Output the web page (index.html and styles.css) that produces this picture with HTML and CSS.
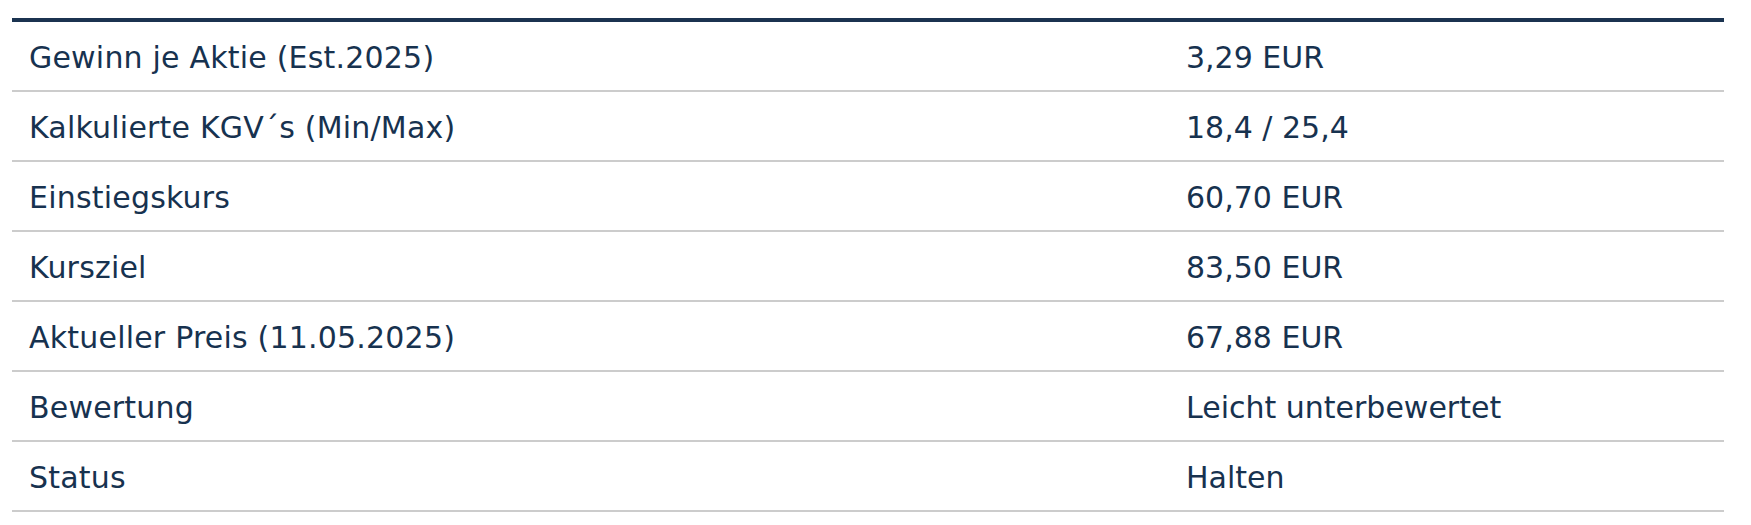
FILE: index.html
```html
<!DOCTYPE html>
<html lang="de">
<head>
<meta charset="utf-8">
<link rel="stylesheet" href="styles.css">
</head>
<body>
<div class="table">
  <div class="row"><div class="cell label">Gewinn je Aktie (Est.2025)</div><div class="cell value">3,29 EUR</div></div>
  <div class="row"><div class="cell label">Kalkulierte KGV´s (Min/Max)</div><div class="cell value">18,4 / 25,4</div></div>
  <div class="row"><div class="cell label">Einstiegskurs</div><div class="cell value">60,70 EUR</div></div>
  <div class="row"><div class="cell label">Kursziel</div><div class="cell value">83,50 EUR</div></div>
  <div class="row"><div class="cell label">Aktueller Preis (11.05.2025)</div><div class="cell value">67,88 EUR</div></div>
  <div class="row"><div class="cell label">Bewertung</div><div class="cell value">Leicht unterbewertet</div></div>
  <div class="row"><div class="cell label">Status</div><div class="cell value">Halten</div></div>
</div>
</body>
</html>
```
FILE: styles.css
```css
html, body {
  margin: 0;
  padding: 0;
  background: #ffffff;
}
body {
  padding: 18px 0 0 12px;
  font-family: "DejaVu Sans", Verdana, sans-serif;
  color: #17324f;
}
.table {
  width: 1712px;
  border-top: 4px solid #1b3350;
}
.row {
  display: grid;
  grid-template-columns: 1157px 1fr;
  height: 68px;
  border-bottom: 2px solid #cccccc;
  align-items: center;
}
.cell {
  padding: 4px 17px 0;
  font-size: 30px;
  line-height: 34px;
  white-space: nowrap;
}
.label {
  letter-spacing: 0.2px;
}
```
